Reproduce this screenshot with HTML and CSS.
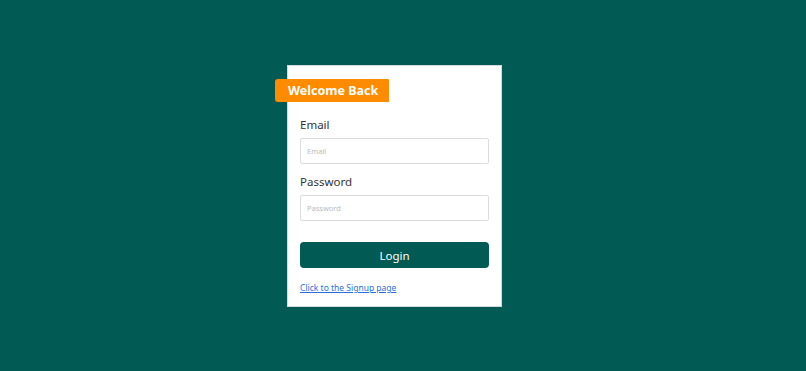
FILE: index.html
```html
<!DOCTYPE html>
<html lang="en">
<head>
    <meta charset="UTF-8">
    <meta name="viewport" content="width=device-width, initial-scale=1.0">
    <title>Login</title>
    <link rel="stylesheet" href="styles.css">
</head>
<body>
    <div class="login-card">
        <div class="badge">Welcome Back</div>
        <form class="login-form" onsubmit="return false">
            <label class="field-label" for="email">Email</label>
            <input class="field-input" type="email" id="email" placeholder="Email">

            <label class="field-label" for="password">Password</label>
            <input class="field-input" type="password" id="password" placeholder="Password">

            <button type="submit" class="login-btn">Login</button>
        </form>
        <a href="#" class="signup-link">Click to the Signup page</a>
    </div>
</body>
</html>
```

FILE: styles.css
```css
body {
    display: flex;
    justify-content: center;
    align-items: flex-start;
    height: 100vh;
    margin: 0;
    background-color: #015a54;
    font-family: "Noto Sans", "Open Sans", sans-serif;
    box-sizing: border-box;
    padding-top: 65px;
}
.login-card {
    position: relative;
    width: 215px;
    height: 242px;
    margin-right: 17px;
    box-sizing: border-box;
    background-color: #fff;
    border: 1px solid #d8d8d8;
    padding: 50px 12px 0 12px;
}
.badge {
    position: absolute;
    top: 13px;
    left: -13px;
    width: 114px;
    height: 23px;
    box-sizing: border-box;
    padding-left: 13px;
    line-height: 23px;
    background-color: #fe8b00;
    color: #fff;
    font-size: 12.5px;
    font-weight: bold;
    border-radius: 3px 1px 0 3px;
}
.login-form {
    display: flex;
    flex-direction: column;
}
.field-label {
    font-size: 11.5px;
    color: #333;
    line-height: 18px;
    margin-bottom: 4px;
}
.field-input {
    height: 26px;
    box-sizing: border-box;
    border: 1px solid #dcdcdc;
    border-radius: 2px;
    padding: 0 6px;
    font-size: 7.5px;
    font-family: inherit;
    margin-bottom: 9px;
}
.field-input::placeholder {
    color: #bbb;
}
.login-btn {
    margin-top: 12px;
    height: 26px;
    border: none;
    border-radius: 4px;
    background-color: #015a54;
    color: #fff;
    font-size: 11.5px;
    font-family: inherit;
    cursor: pointer;
}
.signup-link {
    display: block;
    margin-top: 14px;
    font-size: 8.5px;
    line-height: 12px;
    color: #2a6fe0;
}
```
